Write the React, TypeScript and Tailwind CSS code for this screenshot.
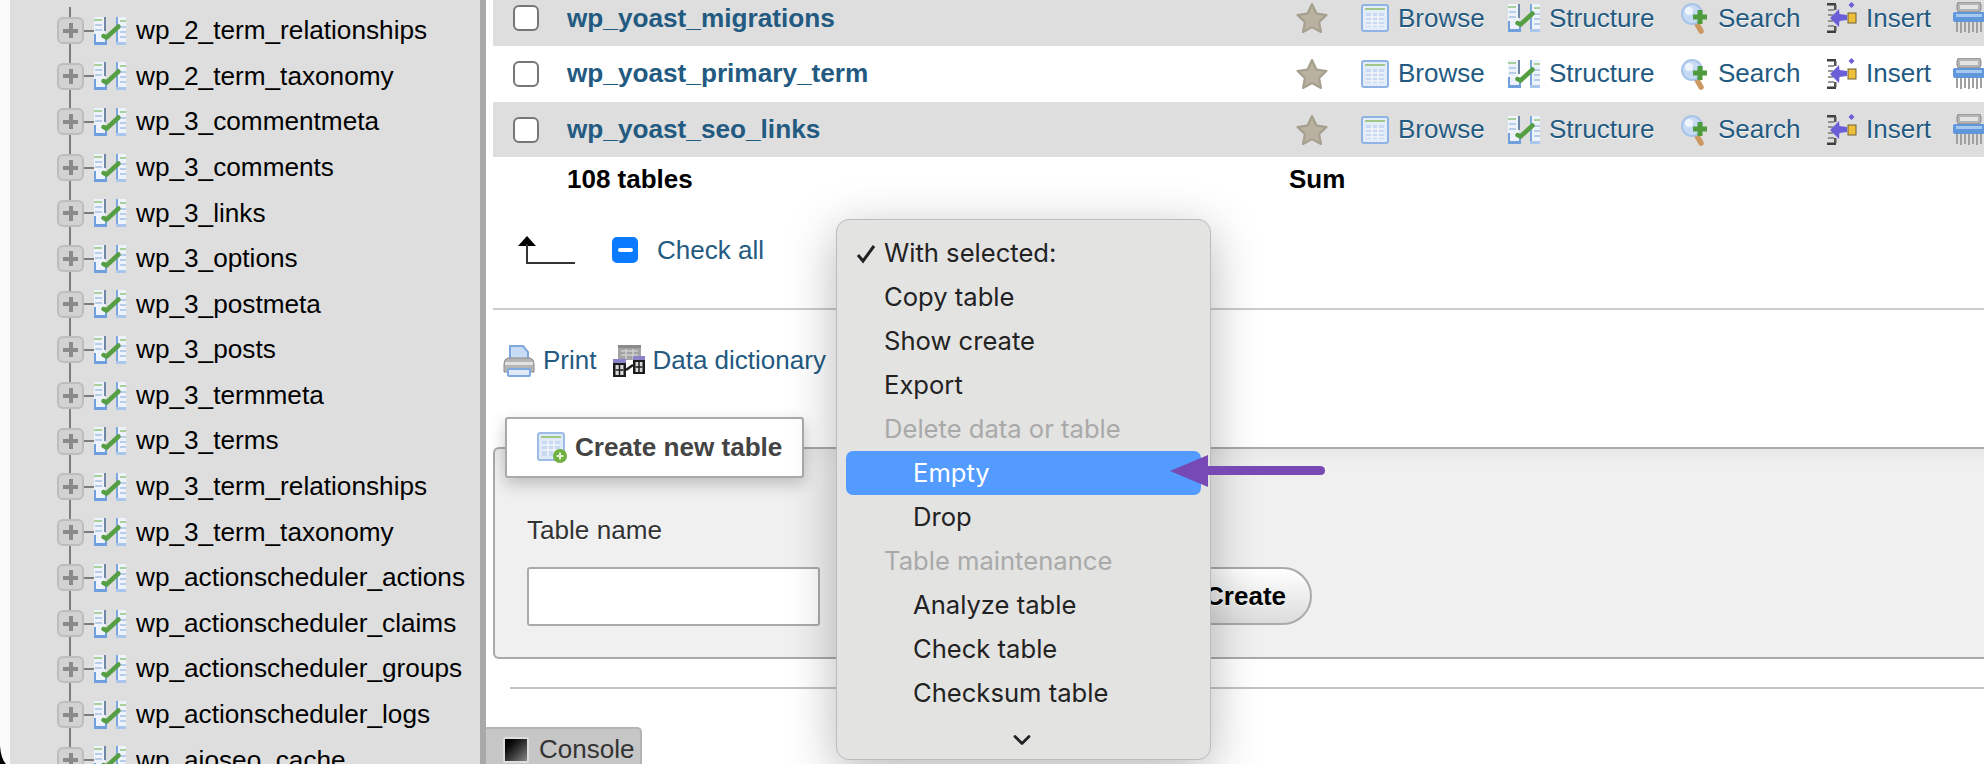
import { ChevronDown } from 'lucide-react'

const font = "font-['Liberation_Sans',Arial,sans-serif]"

const tables = [
  'wp_2_term_relationships',
  'wp_2_term_taxonomy',
  'wp_3_commentmeta',
  'wp_3_comments',
  'wp_3_links',
  'wp_3_options',
  'wp_3_postmeta',
  'wp_3_posts',
  'wp_3_termmeta',
  'wp_3_terms',
  'wp_3_term_relationships',
  'wp_3_term_taxonomy',
  'wp_actionscheduler_actions',
  'wp_actionscheduler_claims',
  'wp_actionscheduler_groups',
  'wp_actionscheduler_logs',
  'wp_aioseo_cache',
]

const rows = [
  { name: 'wp_yoast_migrations', bg: 'bg-[#dedede]' },
  { name: 'wp_yoast_primary_term', bg: 'bg-white' },
  { name: 'wp_yoast_seo_links', bg: 'bg-[#dedede]' },
]

function StructureIcon() {
  return (
    <svg viewBox="0 0 32 28" className="w-[32px] h-[28px] shrink-0 blur-[0.4px]">
      <rect x="0" y="0" width="11" height="28" fill="#eef3fb" />
      <rect x="0" y="2" width="8" height="2" fill="#a9cf9a" />
      <rect x="1" y="7" width="7" height="2" fill="#b9cde8" />
      <rect x="1" y="12" width="7" height="2" fill="#b9cde8" />
      <rect x="0" y="17" width="2" height="11" fill="#6f9fdc" />
      <rect x="0" y="25" width="13" height="3" fill="#6f9fdc" />
      <rect x="10" y="0" width="2" height="14" fill="#7187a6" />
      <rect x="11" y="22" width="2" height="6" fill="#6f9fdc" />
      <rect x="22" y="0" width="10" height="28" fill="#eef3fb" />
      <rect x="22" y="0" width="2" height="28" fill="#7ba7de" />
      <rect x="22" y="25" width="10" height="3" fill="#a9c6ec" />
      <rect x="26" y="3" width="6" height="2" fill="#a9cf9a" />
      <rect x="26" y="9" width="6" height="2" fill="#b9cde8" />
      <rect x="26" y="14" width="6" height="2" fill="#b9cde8" />
      <rect x="26" y="19" width="6" height="2" fill="#b9cde8" />
      <path d="M9.5 19 L12.5 20.5 L24.5 9.5" fill="none" stroke="#559e43" strokeWidth="4.5" strokeLinecap="round" strokeLinejoin="round" />
    </svg>
  )
}

function StarIcon() {
  return (
    <svg viewBox="0 0 32 32" className="w-[32px] h-[32px] blur-[0.4px]">
      <path
        d="M16 2 L20.5 11.5 L30.5 13 L23.2 20 L25 30 L16 25.2 L7 30 L8.8 20 L1.5 13 L11.5 11.5 Z"
        fill="#b8b1a0"
        stroke="#a59e8c"
        strokeWidth="2"
        strokeLinejoin="round"
      />
    </svg>
  )
}

function BrowseIcon() {
  return (
    <svg viewBox="0 0 28 28" className="w-[28px] h-[28px] shrink-0 blur-[0.4px]">
      <rect x="1" y="1" width="26" height="26" rx="2" fill="#e3ecf9" stroke="#8fb3e3" strokeWidth="2" />
      <rect x="4" y="4" width="20" height="2" fill="#9ec985" />
      <path d="M5 9H23V23H5Z" fill="#c9d9f1" />
      <path d="M5 13H23M5 17H23M5 21H23M11 9V24M17 9V24" stroke="#f2f6fc" strokeWidth="1.5" />
    </svg>
  )
}

function SearchIcon() {
  return (
    <svg viewBox="0 0 28 32" className="w-[28px] h-[32px] shrink-0 blur-[0.4px]">
      <path d="M16 22 L20 29" stroke="#c9995f" strokeWidth="5.5" strokeLinecap="round" />
      <circle cx="11" cy="12" r="10" fill="#c7daf4" stroke="#a9c4ea" strokeWidth="2" />
      <circle cx="8" cy="9" r="4" fill="#eef4fc" />
      <path d="M19 8V22M12 15H26" stroke="#4e9a3d" strokeWidth="5" />
    </svg>
  )
}

function InsertIcon() {
  return (
    <svg viewBox="0 0 30 32" className="w-[30px] h-[32px] shrink-0 blur-[0.4px]">
      <path d="M0 1H9V3.5H0ZM0 28.5H9V31H0Z" fill="#3f3f3f" />
      <path d="M7 3H9.5V8H7ZM7 24H9.5V29H7Z" fill="#555" />
      <path d="M1 8H7M1 13H6M1 19H6M1 24H7" stroke="#777" strokeWidth="1.5" />
      <path d="M3 16 L12 7 L12.5 12 L20 13 L20 18 L12.5 19 L12 25 Z" fill="#6a5fd8" />
      <rect x="21" y="11" width="8" height="10" fill="#eebf3a" stroke="#6e6033" strokeWidth="1" />
      <path d="M24.5 0 L27.5 3 L24.5 6 L21.5 3 Z" fill="#6a5fd8" />
    </svg>
  )
}

function ShredderIcon() {
  return (
    <svg viewBox="0 0 32 32" className="w-[32px] h-[32px] shrink-0 blur-[0.4px]">
      <path d="M4 20 V30 M8 20 V31 M12 20 V30 M16 20 V31 M20 20 V30 M24 20 V31 M28 20 V30" stroke="#a0a0a0" strokeWidth="2" fill="none" />
      <rect x="4" y="0" width="24" height="10" rx="3" fill="#b4b4b4" stroke="#8a8a8a" />
      <rect x="7" y="3" width="18" height="4" fill="#e4e4e4" />
      <rect x="0" y="10" width="32" height="10" rx="2" fill="#5f97da" />
      <rect x="3" y="12" width="26" height="3" fill="#a6c7ee" />
    </svg>
  )
}

function PrintIcon() {
  return (
    <svg viewBox="0 0 32 32" className="w-[32px] h-[32px] shrink-0 blur-[0.4px]">
      <path d="M7 1H20L25 7V16H7Z" fill="#c9dcf5" stroke="#7fa8de" strokeWidth="2" />
      <path d="M5 13H27Q31 14 31 19V27H1V19Q1 14 5 13Z" fill="#b5b5b5" stroke="#8b8b8b" strokeWidth="1" />
      <rect x="2" y="17" width="28" height="3" fill="#e2e2e2" />
      <rect x="5" y="24" width="22" height="7" rx="1" fill="#dfe9f8" stroke="#7fa8de" strokeWidth="2" />
    </svg>
  )
}

function DictionaryIcon() {
  return (
    <svg viewBox="0 0 32 32" className="w-[32px] h-[32px] shrink-0 blur-[0.3px]">
      <rect x="5" y="0" width="23" height="15" fill="#a3a3a3" />
      <rect x="5" y="0" width="23" height="3" fill="#8a8a8a" />
      <path d="M8 6H25M8 10H25M13 4V14M20 4V14" stroke="#d0d0d0" strokeWidth="1.5" />
      <rect x="0" y="14" width="13" height="4" fill="#8a83c9" />
      <rect x="20" y="11" width="12" height="4" fill="#8a83c9" />
      <rect x="0" y="18" width="13" height="14" fill="#1c1c1c" />
      <rect x="20" y="15" width="12" height="14" fill="#1c1c1c" />
      <path d="M2.5 20H10.5V30H2.5ZM22.5 17H29.5V27H22.5Z" fill="#d8d8d8" />
      <path d="M2.5 25H10.5M6.5 20V30M22.5 22H29.5M26 17V27" stroke="#1c1c1c" strokeWidth="1.5" />
      <path d="M13 25L20 20" stroke="#1c1c1c" strokeWidth="2.5" />
    </svg>
  )
}

function CreateTableIcon() {
  return (
    <svg viewBox="0 0 30 31" className="w-[30px] h-[31px] shrink-0 blur-[0.3px]">
      <rect x="1" y="1" width="26" height="27" rx="2" fill="#dfe9f8" stroke="#9dbce6" strokeWidth="2" />
      <rect x="4" y="4" width="20" height="2" fill="#9ec985" />
      <path d="M5 9H23V24H5Z" fill="#c9d9f1" />
      <path d="M5 13H23M5 18H23M11 9V24M17 9V24" stroke="#f2f6fc" strokeWidth="1.5" />
      <circle cx="23" cy="24" r="7" fill="#6fb040" />
      <path d="M23 20.5V27.5M19.5 24H26.5" stroke="#e5f4d8" strokeWidth="2" />
    </svg>
  )
}

function Action({ icon, label }: { icon: React.ReactNode; label: string }) {
  return (
    <div className="flex items-center gap-[9px] text-[26px] text-[#235a81] [text-shadow:0_1px_0_#fff]">
      {icon}
      <span>{label}</span>
    </div>
  )
}

function Sidebar() {
  return (
    <div className="w-[486px] h-[764px] shrink-0 pl-[10px] bg-linear-to-r from-[#fbfbfb] to-[#efefef] overflow-hidden">
      <div className="h-full bg-[#dedede] border-r-[6px] border-[#a9a9a9] pt-[8px]">
        {tables.map(t => (
          <div key={t} className="flex items-center h-[45.6px] pl-[47px]">
            <div className="relative w-[27px] h-full flex items-center justify-center">
              <div className="absolute left-[12px] -top-[1px] -bottom-[1px] w-[2px] bg-[#7d7d7d]" />
              <div className="relative w-[27px] h-[27px] rounded-[6px] bg-[#d2d2d2] border-2 border-[#bdbdbd] flex items-center justify-center">
                <div className="absolute w-[15px] h-[4px] bg-[#8a8a8a]" />
                <div className="absolute w-[4px] h-[15px] bg-[#8a8a8a]" />
              </div>
            </div>
            <div className="w-[10px] h-[2px] bg-[#7d7d7d]" />
            <StructureIcon />
            <span className="ml-[10px] text-[26.2px] text-black whitespace-nowrap">{t}</span>
          </div>
        ))}
      </div>
    </div>
  )
}

function Row({ name, bg }: { name: string; bg: string }) {
  return (
    <div className={`grid grid-cols-[74px_729px_65px_147px_173px_146px_126px_1fr] items-center h-[55.7px] overflow-hidden ${bg}`}>
      <div className="pl-[20px]">
        <div className="w-[26px] h-[26px] rounded-[6px] border-2 border-[#767676] bg-white" />
      </div>
      <span className="font-bold text-[26.2px] text-[#235a81]">{name}</span>
      <StarIcon />
      <Action icon={<BrowseIcon />} label="Browse" />
      <Action icon={<StructureIcon />} label="Structure" />
      <Action icon={<SearchIcon />} label="Search" />
      <Action icon={<InsertIcon />} label="Insert" />
      <ShredderIcon />
    </div>
  )
}

const menu: { label: string; kind?: 'check' | 'group' | 'sub' | 'active' }[] = [
  { label: 'With selected:', kind: 'check' },
  { label: 'Copy table' },
  { label: 'Show create' },
  { label: 'Export' },
  { label: 'Delete data or table', kind: 'group' },
  { label: 'Empty', kind: 'active' },
  { label: 'Drop', kind: 'sub' },
  { label: 'Table maintenance', kind: 'group' },
  { label: 'Analyze table', kind: 'sub' },
  { label: 'Check table', kind: 'sub' },
  { label: 'Checksum table', kind: 'sub' },
]

function Dropdown() {
  return (
    <div className="absolute left-[836px] top-[219px] w-[375px] h-[541px] rounded-[13px] bg-[#e3e3e2] border border-[#bcbcbc] shadow-[0_12px_50px_rgba(0,0,0,0.28)] pt-[11px] font-['Inter',sans-serif] text-[25.6px] text-[#222]">
      {menu.map(m => {
        if (m.kind === 'active') {
          return (
            <div key={m.label} className="mx-[9px] h-[44px] rounded-[7px] bg-[#549bff] text-white flex items-center pl-[67px] pt-[1px]">
              {m.label}
            </div>
          )
        }
        return (
          <div
            key={m.label}
            className={`relative h-[44px] flex items-center pt-[1px] ${m.kind === 'sub' ? 'pl-[76px]' : 'pl-[47px]'} ${m.kind === 'group' ? 'text-[#a9a9a9]' : ''}`}
          >
            {m.kind === 'check' && (
              <svg viewBox="0 0 20 20" className="absolute left-[19px] top-[13px] w-[20px] h-[20px]">
                <path d="M2 11 L7 17 L18 2" fill="none" stroke="#222" strokeWidth="3" />
              </svg>
            )}
            {m.label}
          </div>
        )
      })}
      <div className="flex justify-center mt-[11px] pr-[4px]">
        <ChevronDown size={28} strokeWidth={2.4} className="text-[#222]" />
      </div>
    </div>
  )
}

export default function App() {
  return (
    <div className={`relative w-[1984px] h-[764px] overflow-hidden bg-white flex ${font}`}>
      <Sidebar />

      <div className="flex-1 min-w-0 pl-[7px]">
        <div className="-mt-[9.7px]">
          {rows.map(r => <Row key={r.name} {...r} />)}
        </div>

        <div className="flex items-center h-[44px] font-bold text-[26px] text-black">
          <span className="ml-[74px] w-[722px]">108 tables</span>
          <span>Sum</span>
        </div>

        <div className="flex items-center h-[98px] pl-[25px]">
          <svg viewBox="0 0 57 28" className="w-[57px] h-[28px]">
            <path d="M9 0 L18 10 H0 Z" fill="#000" />
            <path d="M9 8 V27 H57" fill="none" stroke="#333" strokeWidth="2" />
          </svg>
          <div className="ml-[37px] w-[26px] h-[26px] rounded-[5px] bg-[#0a7aff] flex items-center justify-center">
            <div className="w-[15px] h-[4px] rounded-full bg-white" />
          </div>
          <span className="ml-[19px] text-[26px] text-[#235a81]">Check all</span>
        </div>

        <div className="mt-[9px] h-[2px] bg-[#cccccc]" />

        <div className="flex items-center h-[101px] pl-[10px] text-[26px] text-[#235a81]">
          <PrintIcon />
          <span className="ml-[8px]">Print</span>
          <div className="ml-[17px]"><DictionaryIcon /></div>
          <span className="ml-[7px]">Data dictionary</span>
        </div>

        <div className="relative mt-[36px] h-[212px] border-2 border-r-0 border-[#aaaaaa] rounded-l-[6px] bg-[#f0f0f0] pt-[68px] pl-[32px] shadow-[inset_0_30px_30px_-30px_rgba(0,0,0,0.06)]">
          <div className="absolute left-[10px] -top-[32px] w-[299px] h-[61px] bg-white border-2 border-[#aaaaaa] rounded-[3px] shadow-[0_6px_16px_rgba(0,0,0,0.22)] flex items-center pl-[30px]">
            <CreateTableIcon />
            <span className="ml-[8px] font-bold text-[26.1px] text-[#444444]">Create new table</span>
          </div>
          <div className="h-[26px] leading-[26px] text-[26.1px] text-[#333333] [text-shadow:0_1px_0_#fff]">Table name</div>
          <div className="flex mt-[24px]">
            <div className="w-[293px] h-[59px] bg-white border-2 border-[#aaaaaa] rounded-[3px]" />
            <div className="ml-[360px] w-[132px] h-[58px] rounded-full border-2 border-[#aaaaaa] bg-linear-to-b from-white to-[#dcdcdc] flex items-center justify-end pr-[24px] font-bold text-[26px] text-black [text-shadow:0_1px_0_#fff]">
              Create
            </div>
          </div>
        </div>

        <div className="mt-[28px] ml-[17px] h-[2px] bg-[#c4c4c4]" />
      </div>

      <div className="absolute left-[486px] top-[727px] w-[156px] h-[37px] bg-[#c6c6c6] rounded-tr-[5px] border-t-2 border-r-2 border-[#b4b4b4] flex items-start pl-[17px] pt-[8px]">
        <div className="w-[26px] h-[26px] border-2 border-[#dddddd] rounded-[2px] bg-linear-to-br from-[#000] to-[#888]" />
        <span className="ml-[10px] -mt-[3px] text-[26px] leading-[30px] text-[#333333]">Console</span>
      </div>

      <Dropdown />

      <svg viewBox="0 0 156 32" className="absolute left-[1170px] top-[455px] w-[156px] h-[32px]">
        <path d="M0 16 L38 0 V11 H150 Q155 11 155 15.5 Q155 20 150 20 H38 V32 Z" fill="#7649b5" />
      </svg>

      <svg viewBox="0 0 6 18" className="absolute left-0 bottom-0 w-[6px] h-[18px]">
        <path d="M0 0 Q1 13 6 18 H0 Z" fill="#000" />
      </svg>
    </div>
  )
}
